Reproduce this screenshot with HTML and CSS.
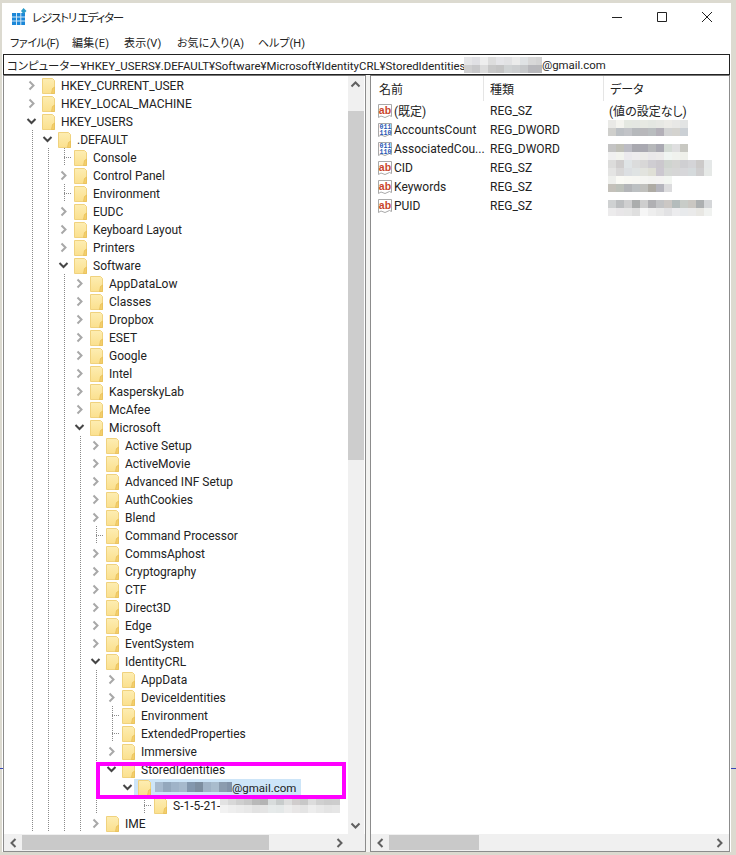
FILE: index.html
```html
<!DOCTYPE html>
<html lang="ja">
<head>
<meta charset="utf-8">
<title>レジストリ エディター</title>
<link rel="stylesheet" href="styles.css">
</head>
<body>
<svg class="defs" aria-hidden="true">
  <symbol id="cl" viewBox="0 0 16 18"><path d="M5.5 5.5 9.5 9.5 5.5 13.5" fill="none" stroke="#a8a8a8" stroke-width="2"/></symbol>
  <symbol id="op" viewBox="0 0 16 18"><path d="M3.5 7 7.5 11 11.5 7" fill="none" stroke="#454545" stroke-width="2"/></symbol>
  <symbol id="fold" viewBox="0 0 13 16">
    <linearGradient id="fg" x1="0" y1="0" x2="0" y2="1"><stop offset="0" stop-color="#fdedb2"/><stop offset="1" stop-color="#fbe08e"/></linearGradient>
    <path d="M.5.5H10.5L12.5 2.5V15.5H.5Z" fill="url(#fg)" stroke="#f0d27e"/>
    <path d="M9.5 15.5 10.5 10.5 12.5 9V15.5Z" fill="#f4cf6c" stroke="#e6bd55" stroke-width=".7"/>
  </symbol>
  <symbol id="page" viewBox="0 0 16 16">
    <path d="M1.5 1.5H14.5V13.5L12.5 12.5 8 14.5 4 13 1.5 14.5Z" fill="#fff" stroke="#a9a9a9"/>
  </symbol>
</svg>

<div class="window">
  <header class="titlebar">
    <svg class="appicon" width="16" height="18" viewBox="0 0 16 18">
      <path d="M1 5H14V17H1Z" fill="#1b87d8"/>
      <path d="M5.5 5V17M9.8 5V17M1 9H14M1 13H14" stroke="#cfe6f7" stroke-width="1"/>
      <path d="M12.5 0 15.5 3 12.5 6 10 3Z" fill="#2a9bc9"/>
    </svg>
    <span class="title">レジストリ エディター</span>
    <div class="controls">
      <svg width="10" height="10" viewBox="0 0 10 10"><path d="M0 5.5H10" stroke="#222"/></svg>
      <svg width="10" height="10" viewBox="0 0 10 10"><path d="M.5.5H9.5V9.5H.5Z" fill="none" stroke="#222"/></svg>
      <svg width="10" height="10" viewBox="0 0 10 10"><path d="M0 0 10 10M10 0 0 10" stroke="#222"/></svg>
    </div>
  </header>
  <nav class="menubar">
    <span class="m1">ファイル(F)</span>
    <span class="m2">編集(E)</span>
    <span class="m3">表示(V)</span>
    <span class="m4">お気に入り(A)</span>
    <span class="m5">ヘルプ(H)</span>
  </nav>
  <div class="addr">
    <span class="addr-path">コンピューター¥HKEY_USERS¥.DEFAULT¥Software¥Microsoft¥IdentityCRL¥StoredIdentities¥</span>
    <svg class="mz" width="78" height="16">
      <rect x="0" y="0" fill="#e6e6e8"/><rect x="8" y="0" fill="#e0e0e4"/><rect x="16" y="0" fill="#eeeeee"/><rect x="24" y="0" fill="#dddddd"/><rect x="32" y="0" fill="#e5e5e8"/><rect x="40" y="0" fill="#e2e2e4"/><rect x="48" y="0" fill="#ebebeb"/><rect x="56" y="0" fill="#dfe2e4"/><rect x="64" y="0" fill="#d8d8d8"/><rect x="72" y="0" fill="#d4d4d4"/>
      <rect x="0" y="8" fill="#cfcfd0"/><rect x="8" y="8" fill="#c8c8ca"/><rect x="16" y="8" fill="#dcdcdc"/><rect x="24" y="8" fill="#c8c8c8"/><rect x="32" y="8" fill="#c4c4c4"/><rect x="40" y="8" fill="#cfd2d3"/><rect x="48" y="8" fill="#ccced0"/><rect x="56" y="8" fill="#c6c8ca"/><rect x="64" y="8" fill="#b8b8bc"/><rect x="72" y="8" fill="#b8b8bb"/>
    </svg>
    <span>@gmail.com</span>
  </div>

  <main class="panes">
    <section class="tree">
      <div class="tree-main">
        <div class="rows">
          <div class="row"><svg class="cv"><use href="#cl"/></svg><svg class="fd"><use href="#fold"/></svg><span>HKEY_CURRENT_USER</span></div>
          <div class="row"><svg class="cv"><use href="#cl"/></svg><svg class="fd"><use href="#fold"/></svg><span>HKEY_LOCAL_MACHINE</span></div>
          <div class="row"><svg class="cv"><use href="#op"/></svg><svg class="fd"><use href="#fold"/></svg><span>HKEY_USERS</span></div>
          <div class="row"><i class="g"></i><svg class="cv"><use href="#op"/></svg><svg class="fd"><use href="#fold"/></svg><span>.DEFAULT</span></div>
          <div class="row"><i class="g"></i><i class="g"></i><i class="t"></i><svg class="fd"><use href="#fold"/></svg><span>Console</span></div>
          <div class="row"><i class="g"></i><i class="g"></i><svg class="cv"><use href="#cl"/></svg><svg class="fd"><use href="#fold"/></svg><span>Control Panel</span></div>
          <div class="row"><i class="g"></i><i class="g"></i><i class="t"></i><svg class="fd"><use href="#fold"/></svg><span>Environment</span></div>
          <div class="row"><i class="g"></i><i class="g"></i><svg class="cv"><use href="#cl"/></svg><svg class="fd"><use href="#fold"/></svg><span>EUDC</span></div>
          <div class="row"><i class="g"></i><i class="g"></i><svg class="cv"><use href="#cl"/></svg><svg class="fd"><use href="#fold"/></svg><span>Keyboard Layout</span></div>
          <div class="row"><i class="g"></i><i class="g"></i><svg class="cv"><use href="#cl"/></svg><svg class="fd"><use href="#fold"/></svg><span>Printers</span></div>
          <div class="row"><i class="g"></i><i class="g"></i><svg class="cv"><use href="#op"/></svg><svg class="fd"><use href="#fold"/></svg><span>Software</span></div>
          <div class="row"><i class="g"></i><i class="g"></i><i class="g"></i><svg class="cv"><use href="#cl"/></svg><svg class="fd"><use href="#fold"/></svg><span>AppDataLow</span></div>
          <div class="row"><i class="g"></i><i class="g"></i><i class="g"></i><svg class="cv"><use href="#cl"/></svg><svg class="fd"><use href="#fold"/></svg><span>Classes</span></div>
          <div class="row"><i class="g"></i><i class="g"></i><i class="g"></i><svg class="cv"><use href="#cl"/></svg><svg class="fd"><use href="#fold"/></svg><span>Dropbox</span></div>
          <div class="row"><i class="g"></i><i class="g"></i><i class="g"></i><svg class="cv"><use href="#cl"/></svg><svg class="fd"><use href="#fold"/></svg><span>ESET</span></div>
          <div class="row"><i class="g"></i><i class="g"></i><i class="g"></i><svg class="cv"><use href="#cl"/></svg><svg class="fd"><use href="#fold"/></svg><span>Google</span></div>
          <div class="row"><i class="g"></i><i class="g"></i><i class="g"></i><svg class="cv"><use href="#cl"/></svg><svg class="fd"><use href="#fold"/></svg><span>Intel</span></div>
          <div class="row"><i class="g"></i><i class="g"></i><i class="g"></i><svg class="cv"><use href="#cl"/></svg><svg class="fd"><use href="#fold"/></svg><span>KasperskyLab</span></div>
          <div class="row"><i class="g"></i><i class="g"></i><i class="g"></i><svg class="cv"><use href="#cl"/></svg><svg class="fd"><use href="#fold"/></svg><span>McAfee</span></div>
          <div class="row"><i class="g"></i><i class="g"></i><i class="g"></i><svg class="cv"><use href="#op"/></svg><svg class="fd"><use href="#fold"/></svg><span>Microsoft</span></div>
          <div class="row"><i class="g"></i><i class="g"></i><i class="g"></i><i class="g"></i><svg class="cv"><use href="#cl"/></svg><svg class="fd"><use href="#fold"/></svg><span>Active Setup</span></div>
          <div class="row"><i class="g"></i><i class="g"></i><i class="g"></i><i class="g"></i><svg class="cv"><use href="#cl"/></svg><svg class="fd"><use href="#fold"/></svg><span>ActiveMovie</span></div>
          <div class="row"><i class="g"></i><i class="g"></i><i class="g"></i><i class="g"></i><svg class="cv"><use href="#cl"/></svg><svg class="fd"><use href="#fold"/></svg><span>Advanced INF Setup</span></div>
          <div class="row"><i class="g"></i><i class="g"></i><i class="g"></i><i class="g"></i><svg class="cv"><use href="#cl"/></svg><svg class="fd"><use href="#fold"/></svg><span>AuthCookies</span></div>
          <div class="row"><i class="g"></i><i class="g"></i><i class="g"></i><i class="g"></i><svg class="cv"><use href="#cl"/></svg><svg class="fd"><use href="#fold"/></svg><span>Blend</span></div>
          <div class="row"><i class="g"></i><i class="g"></i><i class="g"></i><i class="g"></i><i class="t"></i><svg class="fd"><use href="#fold"/></svg><span>Command Processor</span></div>
          <div class="row"><i class="g"></i><i class="g"></i><i class="g"></i><i class="g"></i><svg class="cv"><use href="#cl"/></svg><svg class="fd"><use href="#fold"/></svg><span>CommsAphost</span></div>
          <div class="row"><i class="g"></i><i class="g"></i><i class="g"></i><i class="g"></i><svg class="cv"><use href="#cl"/></svg><svg class="fd"><use href="#fold"/></svg><span>Cryptography</span></div>
          <div class="row"><i class="g"></i><i class="g"></i><i class="g"></i><i class="g"></i><svg class="cv"><use href="#cl"/></svg><svg class="fd"><use href="#fold"/></svg><span>CTF</span></div>
          <div class="row"><i class="g"></i><i class="g"></i><i class="g"></i><i class="g"></i><svg class="cv"><use href="#cl"/></svg><svg class="fd"><use href="#fold"/></svg><span>Direct3D</span></div>
          <div class="row"><i class="g"></i><i class="g"></i><i class="g"></i><i class="g"></i><svg class="cv"><use href="#cl"/></svg><svg class="fd"><use href="#fold"/></svg><span>Edge</span></div>
          <div class="row"><i class="g"></i><i class="g"></i><i class="g"></i><i class="g"></i><svg class="cv"><use href="#cl"/></svg><svg class="fd"><use href="#fold"/></svg><span>EventSystem</span></div>
          <div class="row"><i class="g"></i><i class="g"></i><i class="g"></i><i class="g"></i><svg class="cv"><use href="#op"/></svg><svg class="fd"><use href="#fold"/></svg><span>IdentityCRL</span></div>
          <div class="row"><i class="g"></i><i class="g"></i><i class="g"></i><i class="g"></i><i class="g"></i><svg class="cv"><use href="#cl"/></svg><svg class="fd"><use href="#fold"/></svg><span>AppData</span></div>
          <div class="row"><i class="g"></i><i class="g"></i><i class="g"></i><i class="g"></i><i class="g"></i><svg class="cv"><use href="#cl"/></svg><svg class="fd"><use href="#fold"/></svg><span>DeviceIdentities</span></div>
          <div class="row"><i class="g"></i><i class="g"></i><i class="g"></i><i class="g"></i><i class="g"></i><i class="t"></i><svg class="fd"><use href="#fold"/></svg><span>Environment</span></div>
          <div class="row"><i class="g"></i><i class="g"></i><i class="g"></i><i class="g"></i><i class="g"></i><i class="t"></i><svg class="fd"><use href="#fold"/></svg><span>ExtendedProperties</span></div>
          <div class="row"><i class="g"></i><i class="g"></i><i class="g"></i><i class="g"></i><i class="g"></i><svg class="cv"><use href="#cl"/></svg><svg class="fd"><use href="#fold"/></svg><span>Immersive</span></div>
          <div class="row"><i class="g"></i><i class="g"></i><i class="g"></i><i class="g"></i><i class="g"></i><svg class="cv"><use href="#op"/></svg><svg class="fd"><use href="#fold"/></svg><span>StoredIdentities</span></div>
          <div class="row"><i class="g"></i><i class="g"></i><i class="g"></i><i class="g"></i><i class="g"></i><i class="b"></i><svg class="cv"><use href="#op"/></svg>
            <div class="sel"><svg class="fd"><use href="#fold"/></svg>
              <svg class="mz sel-mz" width="77" height="10">
                <rect x="0" y="0" fill="#a7bace"/><rect x="8" y="0" fill="#94a8bd"/><rect x="16" y="0" fill="#9fb3c8"/><rect x="24" y="0" fill="#a6b9cc"/><rect x="32" y="0" fill="#8397ad"/><rect x="40" y="0" fill="#7d8ea0"/><rect x="48" y="0" fill="#a0b3c6"/><rect x="56" y="0" fill="#a9bccd"/><rect x="64" y="0" fill="#8b9caf"/><rect x="72" y="0" fill="#8293a8"/>
                <rect x="0" y="8" fill="#a7bace"/><rect x="8" y="8" fill="#94a8bd"/><rect x="16" y="8" fill="#9fb3c8"/><rect x="24" y="8" fill="#a6b9cc"/><rect x="32" y="8" fill="#8397ad"/><rect x="40" y="8" fill="#7d8ea0"/><rect x="48" y="8" fill="#a0b3c6"/><rect x="56" y="8" fill="#a9bccd"/><rect x="64" y="8" fill="#8b9caf"/><rect x="72" y="8" fill="#8293a8"/>
              </svg><span>@gmail.com</span></div>
          </div>
          <div class="row"><i class="g"></i><i class="g"></i><i class="g"></i><i class="g"></i><i class="g"></i><i class="b"></i><i class="b"></i><i class="t"></i><svg class="fd"><use href="#fold"/></svg><span>S-1-5-21-</span>
            <svg class="mz sid-mz" width="120" height="16">
              <rect x="0" y="0" fill="#e2e2e2"/><rect x="8" y="0" fill="#d8d8d8"/><rect x="16" y="0" fill="#cfcfcf"/><rect x="24" y="0" fill="#c8c8c8"/><rect x="32" y="0" fill="#b9b9b9"/><rect x="40" y="0" fill="#b4b4b4"/><rect x="48" y="0" fill="#d8dcdc"/><rect x="56" y="0" fill="#c8cccc"/><rect x="64" y="0" fill="#dddddd"/><rect x="72" y="0" fill="#d0cccc"/><rect x="80" y="0" fill="#c8c8c8"/><rect x="88" y="0" fill="#dcdcdc"/><rect x="96" y="0" fill="#d0d0d0"/><rect x="104" y="0" fill="#cccccc"/><rect x="112" y="0" fill="#cdcdcd"/>
              <rect x="0" y="8" fill="#f2f2f2"/><rect x="8" y="8" fill="#eeeeee"/><rect x="16" y="8" fill="#ebebeb"/><rect x="24" y="8" fill="#e8e8e8"/><rect x="32" y="8" fill="#e2e2e2"/><rect x="40" y="8" fill="#e4e4e4"/><rect x="48" y="8" fill="#e6eaea"/><rect x="56" y="8" fill="#e4e8e8"/><rect x="64" y="8" fill="#ececec"/><rect x="72" y="8" fill="#e8e6e6"/><rect x="80" y="8" fill="#e4e4e4"/><rect x="88" y="8" fill="#ededed"/><rect x="96" y="8" fill="#e8e8e8"/><rect x="104" y="8" fill="#e4e4e4"/><rect x="112" y="8" fill="#e6e6e6"/>
            </svg>
          </div>
          <div class="row"><i class="g"></i><i class="g"></i><i class="g"></i><i class="g"></i><svg class="cv"><use href="#cl"/></svg><svg class="fd"><use href="#fold"/></svg><span>IME</span></div>
        </div>
        <div class="vscroll">
          <svg class="sb-btn" width="16" height="17" viewBox="0 0 16 17"><path d="M3.5 10.5 7.5 6.5 11.5 10.5" fill="none" stroke="#606060" stroke-width="2"/></svg>
          <div class="vthumb"></div>
          <div class="grow"></div>
          <svg class="sb-btn" width="16" height="17" viewBox="0 0 16 17"><path d="M3.5 6.5 7.5 10.5 11.5 6.5" fill="none" stroke="#606060" stroke-width="2"/></svg>
        </div>
      </div>
      <div class="hscroll">
        <svg class="sb-h" width="18" height="16" viewBox="0 0 18 16"><path d="M11.5 4 7.5 8 11.5 12" fill="none" stroke="#606060" stroke-width="2"/></svg>
        <div class="hthumb tree-thumb"></div>
        <div class="grow"></div>
        <svg class="sb-h tree-right" width="18" height="16" viewBox="0 0 18 16"><path d="M6.5 4 10.5 8 6.5 12" fill="none" stroke="#606060" stroke-width="2"/></svg>
      </div>
      <div class="callout"></div>
    </section>

    <section class="list">
      <div class="list-main">
        <div class="head">
          <div class="h-name">名前</div>
          <div class="h-type">種類</div>
          <div class="h-data">データ</div>
        </div>
        <div class="item"><svg class="vi" viewBox="0 0 16 16"><use href="#page"/><text x="1.8" y="10.5" class="abt">ab</text></svg><span class="name">(既定)</span><span class="type">REG_SZ</span><span class="data">(値の設定なし)</span></div>
        <div class="item"><svg class="vi" viewBox="0 0 16 16"><use href="#page"/><text x="2.6" y="7" class="bint">011</text><text x="2.6" y="12.6" class="bint">110</text></svg><span class="name">AccountsCount</span><span class="type">REG_DWORD</span></div>
        <div class="item"><svg class="vi" viewBox="0 0 16 16"><use href="#page"/><text x="2.6" y="7" class="bint">011</text><text x="2.6" y="12.6" class="bint">110</text></svg><span class="name">AssociatedCou...</span><span class="type">REG_DWORD</span></div>
        <div class="item"><svg class="vi" viewBox="0 0 16 16"><use href="#page"/><text x="1.8" y="10.5" class="abt">ab</text></svg><span class="name">CID</span><span class="type">REG_SZ</span></div>
        <div class="item"><svg class="vi" viewBox="0 0 16 16"><use href="#page"/><text x="1.8" y="10.5" class="abt">ab</text></svg><span class="name">Keywords</span><span class="type">REG_SZ</span></div>
        <div class="item"><svg class="vi" viewBox="0 0 16 16"><use href="#page"/><text x="1.8" y="10.5" class="abt">ab</text></svg><span class="name">PUID</span><span class="type">REG_SZ</span></div>
        <svg class="mz data-mz" width="104" height="96">
          <rect x="0" y="0" fill="#e9e9e6"/><rect x="8" y="0" fill="#f4f4ef"/><rect x="16" y="0" fill="#e4e8e1"/><rect x="24" y="0" fill="#e4e7e2"/><rect x="32" y="0" fill="#e7e9e3"/><rect x="40" y="0" fill="#e4e7e2"/><rect x="48" y="0" fill="#e7e8e4"/><rect x="56" y="0" fill="#ecebe7"/><rect x="64" y="0" fill="#e8e8e6"/><rect x="72" y="0" fill="#e2e4e4"/>
          <rect x="0" y="8" fill="#cfcfcc"/><rect x="8" y="8" fill="#bcc0c4"/><rect x="16" y="8" fill="#c2c4c8"/><rect x="24" y="8" fill="#b6b9bc"/><rect x="32" y="8" fill="#b8b8bb"/><rect x="40" y="8" fill="#b9bdbf"/><rect x="48" y="8" fill="#b3b0b8"/><rect x="56" y="8" fill="#d2d3d3"/><rect x="64" y="8" fill="#d4d3cf"/><rect x="72" y="8" fill="#cbd0d5"/>
          <rect x="0" y="24" fill="#c4c4c4"/><rect x="8" y="24" fill="#c0c0b8"/><rect x="16" y="24" fill="#bcbcc4"/><rect x="24" y="24" fill="#a9a9b0"/><rect x="32" y="24" fill="#a9a9b1"/><rect x="40" y="24" fill="#b6b8ba"/><rect x="48" y="24" fill="#a9a9b2"/><rect x="56" y="24" fill="#d5dcd6"/><rect x="64" y="24" fill="#dfdfe0"/><rect x="72" y="24" fill="#c8c8c2"/>
          <rect x="0" y="32" fill="#f0f0f0"/><rect x="8" y="32" fill="#f2f3ee"/><rect x="16" y="32" fill="#ebe9ed"/><rect x="24" y="32" fill="#eeecee"/><rect x="32" y="32" fill="#ecece9"/><rect x="40" y="32" fill="#e9e8ea"/><rect x="48" y="32" fill="#ebeaea"/><rect x="56" y="32" fill="#f0f5f2"/><rect x="64" y="32" fill="#f0f2ee"/><rect x="72" y="32" fill="#eff0ea"/>
          <rect x="0" y="40" fill="#dcdcdb"/><rect x="8" y="40" fill="#cfcdcd"/><rect x="16" y="40" fill="#dfe4e6"/><rect x="24" y="40" fill="#dbdcdc"/><rect x="32" y="40" fill="#d8d7d7"/><rect x="40" y="40" fill="#cfcdd2"/><rect x="48" y="40" fill="#cbc8cd"/><rect x="56" y="40" fill="#cfd4cf"/><rect x="64" y="40" fill="#d4d4d2"/><rect x="72" y="40" fill="#cfcfd2"/><rect x="80" y="40" fill="#d4d4d7"/><rect x="88" y="40" fill="#cccac9"/><rect x="96" y="40" fill="#e5e8e8"/>
          <rect x="0" y="48" fill="#e4e4e3"/><rect x="8" y="48" fill="#d8d7d7"/><rect x="16" y="48" fill="#dcdfe2"/><rect x="24" y="48" fill="#dfe3e3"/><rect x="32" y="48" fill="#e2e3de"/><rect x="40" y="48" fill="#dfdfd6"/><rect x="48" y="48" fill="#ccc8d0"/><rect x="56" y="48" fill="#d5d8d5"/><rect x="64" y="48" fill="#d6d6d6"/><rect x="72" y="48" fill="#d7d7da"/><rect x="80" y="48" fill="#d5dadc"/><rect x="88" y="48" fill="#cfcecf"/><rect x="96" y="48" fill="#e6e9e7"/>
          <rect x="0" y="56" fill="#eeefec"/><rect x="8" y="56" fill="#fafaf5"/><rect x="16" y="56" fill="#f8f8f3"/><rect x="24" y="56" fill="#f7f7f3"/><rect x="32" y="56" fill="#f5f5f2"/><rect x="40" y="56" fill="#f3f3f1"/><rect x="48" y="56" fill="#f4f3f2"/><rect x="56" y="56" fill="#f3f6f2"/>
          <rect x="0" y="64" fill="#c4c1ba"/><rect x="8" y="64" fill="#bdc1ba"/><rect x="16" y="64" fill="#b3b5b8"/><rect x="24" y="64" fill="#bcc0c2"/><rect x="32" y="64" fill="#c0c0bd"/><rect x="40" y="64" fill="#aeaba4"/><rect x="48" y="64" fill="#b5b5bd"/><rect x="56" y="64" fill="#dcdcde"/>
          <rect x="0" y="80" fill="#cfd1d2"/><rect x="8" y="80" fill="#bcbec0"/><rect x="16" y="80" fill="#cfcfd0"/><rect x="24" y="80" fill="#abadad"/><rect x="32" y="80" fill="#cecece"/><rect x="40" y="80" fill="#b0b0b3"/><rect x="48" y="80" fill="#c2c3c5"/><rect x="56" y="80" fill="#cbc7c4"/><rect x="64" y="80" fill="#b4bcbc"/><rect x="72" y="80" fill="#c8ccc8"/><rect x="80" y="80" fill="#cac7c2"/><rect x="88" y="80" fill="#adb0b1"/><rect x="96" y="80" fill="#d5d7d9"/>
          <rect x="0" y="88" fill="#ecebec"/><rect x="8" y="88" fill="#e8e6e8"/><rect x="16" y="88" fill="#e6e6e6"/><rect x="24" y="88" fill="#dfdfdf"/><rect x="32" y="88" fill="#f6f6f6"/><rect x="40" y="88" fill="#eeeeee"/><rect x="48" y="88" fill="#e9e9e9"/><rect x="56" y="88" fill="#e2e2e4"/><rect x="64" y="88" fill="#ececee"/><rect x="72" y="88" fill="#e8eaec"/><rect x="80" y="88" fill="#eaeaea"/><rect x="88" y="88" fill="#e8e7e3"/><rect x="96" y="88" fill="#f0f2f0"/>
        </svg>
      </div>
      <div class="hscroll">
        <svg class="sb-h" width="18" height="16" viewBox="0 0 18 16"><path d="M11.5 4 7.5 8 11.5 12" fill="none" stroke="#606060" stroke-width="2"/></svg>
        <div class="hthumb list-thumb"></div>
        <div class="grow"></div>
        <svg class="sb-h" width="18" height="16" viewBox="0 0 18 16"><path d="M6.5 4 10.5 8 6.5 12" fill="none" stroke="#606060" stroke-width="2"/></svg>
      </div>
    </section>
  </main>
</div>
</body>
</html>
```

FILE: styles.css
```css
* { box-sizing: border-box; }

html, body { height: 100%; }

body {
  margin: 0;
  position: relative;
  overflow: hidden;
  background: #dcdad0;
  font-family: Roboto, "Noto Sans CJK JP", sans-serif;
  font-size: 12px;
  font-feature-settings: "palt";
  color: #222;
}

body::before,
body::after {
  content: "";
  position: absolute;
  top: 768px;
  height: 1px;
  background: #3a46b8;
}
body::before { left: 0; width: 3px; }
body::after { left: 731px; width: 5px; }

.defs { position: absolute; width: 0; height: 0; }

.window {
  margin: 3px 5px 0 2px;
  height: 849px;
  padding: 0 1px;
  background: #fff;
  display: flex;
  flex-direction: column;
}

/* title bar */
.titlebar {
  height: 27px;
  display: flex;
  align-items: center;
  padding-left: 8px;
}
.appicon { margin-right: 5px; }
.title { font-size: 11.5px; letter-spacing: -1.2px; }
.controls {
  margin-left: auto;
  display: flex;
  gap: 35px;
  padding-right: 18px;
}

/* menu */
.menubar {
  height: 24px;
  display: flex;
  align-items: center;
  padding-left: 7px;
  font-size: 11px;
}
.m1 { width: 62px; letter-spacing: -.4px; }
.m2 { width: 52px; letter-spacing: .3px; }
.m3 { width: 53px; letter-spacing: .2px; }
.m4 { width: 81px; }

/* address */
.addr {
  height: 21px;
  border: 1.5px solid #222;
  display: flex;
  align-items: center;
  padding-left: 3px;
  white-space: nowrap;
  font-size: 11.4px;
}
.addr-path { width: 457px; flex: none; }

.mz { flex: none; shape-rendering: crispEdges; }
.mz rect { width: 8px; height: 8px; }

/* panes */
.panes { flex: 1; display: flex; min-height: 0; background: #f3f3f1; }

.tree {
  position: relative;
  width: 363px;
  border: 1px solid #8c8c8c;
  border-top-color: #777;
  background: #fff;
  display: flex;
  flex-direction: column;
}
.tree-main { flex: 1; display: flex; min-height: 0; }
.rows { flex: 1; padding-left: 20px; overflow: hidden; min-width: 0; }

.row {
  height: 18px;
  display: flex;
  align-items: center;
  white-space: nowrap;
}
.row > span { margin-left: 6px; padding-top: 2px; }

.g, .t, .b, .cv { flex: none; width: 16px; height: 18px; display: block; }
.g { background: repeating-linear-gradient(#8a8a8a 0 1px, transparent 1px 2px) 8px 0 / 1px 100% no-repeat; }
.t {
  background:
    repeating-linear-gradient(#8a8a8a 0 1px, transparent 1px 2px) 8px 0 / 1px 100% no-repeat,
    repeating-linear-gradient(90deg, #8a8a8a 0 1px, transparent 1px 2px) 8px 9px / 8px 1px no-repeat;
}
.fd { flex: none; width: 13px; height: 16px; margin: 1px 0 0 2px; display: block; }

.sel {
  display: flex;
  align-items: center;
  height: 17px;
  margin-left: -2px;
  padding: 0 5px 0 2px;
  background: #cde5f8;
}
.sel .fd { margin-left: 2px; }
.sel-mz { margin-left: 4px; }
.sel span { font-size: 11.5px; padding-top: 2px; }
.sid-mz { margin-left: 0; }

.vscroll {
  flex: none;
  width: 16px;
  margin-right: 1px;
  background: #f0f0f0;
  display: flex;
  flex-direction: column;
}
.sb-btn { flex: none; display: block; }
.vthumb { flex: none; height: 349px; margin-top: 18px; background: #cdcdcd; }
.grow { flex: 1; }

.hscroll {
  flex: none;
  height: 17px;
  background: #f0f0f0;
  display: flex;
  align-items: center;
}
.sb-h { flex: none; display: block; }
.hthumb { flex: none; height: 15px; background: #c9c9c9; }
.tree-thumb { width: 247px; }
.list-thumb { width: 90px; }
.tree-right { margin-right: 16px; }

.callout {
  position: absolute;
  left: 92px;
  top: 686px;
  width: 250px;
  height: 37px;
  border: 4px solid #f0f;
}

/* list */
.list {
  position: relative;
  margin-left: 4px;
  width: 360px;
  border: 1px solid #8c8c8c;
  border-top-color: #777;
  background: #fff;
  display: flex;
  flex-direction: column;
}
.list-main { flex: 1; position: relative; min-height: 0; }

.head { height: 25px; display: flex; align-items: center; }
.h-name { width: 113px; padding-left: 8px; align-self: stretch; display: flex; align-items: center; border-right: 1px solid #e5e5e5; }
.h-type { width: 120px; padding-left: 6px; align-self: stretch; display: flex; align-items: center; border-right: 1px solid #e5e5e5; }
.h-data { padding-left: 6px; }

.item { height: 19px; display: flex; align-items: center; white-space: nowrap; }
.vi { flex: none; width: 16px; height: 16px; margin-left: 6px; display: block; }
.name { width: 96px; margin-left: 1px; flex: none; }
.type { width: 119px; flex: none; }

.data-mz { position: absolute; left: 237px; top: 44px; }

.abt { font: bold 10.5px "Liberation Sans", sans-serif; fill: #c9452b; }
.bint { font: bold 6.6px "Liberation Mono", monospace; fill: #2457b5; }
```
